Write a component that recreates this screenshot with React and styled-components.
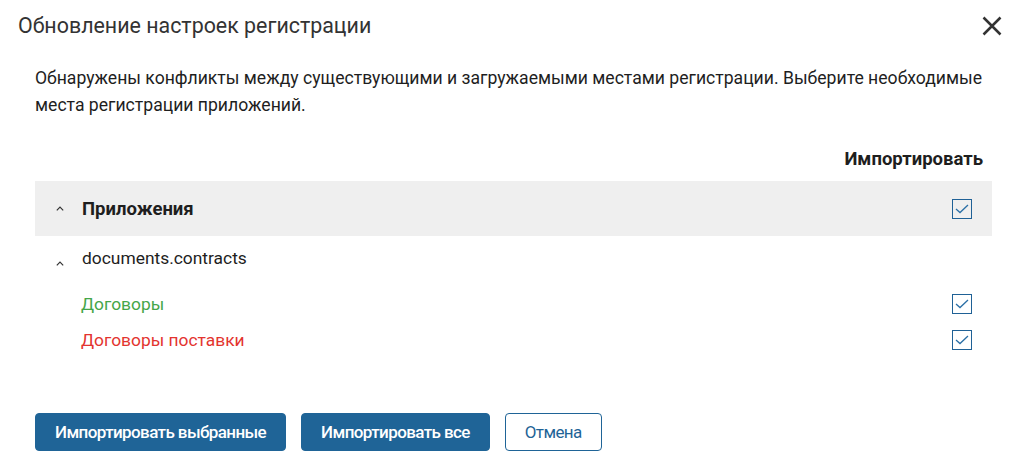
import React from "react";
import styled, { createGlobalStyle } from "styled-components";

const Global = createGlobalStyle`
  html, body { margin: 0; padding: 0; background: #fff; }
  body { font-family: Roboto, "Noto Sans", Arial, sans-serif; color: #212121; }
  * { box-sizing: border-box; }
`;

const Dialog = styled.div`
  width: 1027px;
  height: 461px;
  display: flex;
  flex-direction: column;
  background: #fff;
`;

const Header = styled.div`
  display: flex;
  align-items: center;
  justify-content: space-between;
  height: 51px;
  padding: 0 25px 0 18px;
`;

const Title = styled.h2`
  margin: 0;
  font-size: 21.4px;
  font-weight: 400;
  color: #333;
`;

const Close = styled.button`
  border: 0;
  background: none;
  padding: 0;
  width: 20px;
  height: 20px;
  display: flex;
  align-items: center;
  justify-content: center;
  cursor: pointer;
`;

const Body = styled.div`
  padding: 14px 35px 0 35px;
  display: flex;
  flex-direction: column;
`;

const Description = styled.p`
  margin: 0;
  font-size: 17.6px;
  line-height: 27px;
  color: #1e1e1e;
`;

const ColumnHead = styled.div`
  display: flex;
  justify-content: flex-end;
  align-items: center;
  height: 22px;
  margin-top: 29px;
  padding-right: 9px;
  font-size: 18.5px;
  font-weight: 700;
  color: #1e1e1e;
`;

const Row = styled.div`
  display: flex;
  align-items: center;
  height: ${(p) => p.$h}px;
  margin-top: ${(p) => p.$mt || 0}px;
  padding: 0 20px 0 ${(p) => p.$indent}px;
  background: ${(p) => (p.$shaded ? "#efefef" : "transparent")};
`;

const Chevron = styled.span`
  width: 9px;
  display: flex;
  align-items: center;
  margin-right: 17px;
  margin-top: ${(p) => p.$drop || 0}px;
`;

const Label = styled.span`
  flex: 1;
  font-size: ${(p) => (p.$bold ? 18.5 : 17.4)}px;
  font-weight: ${(p) => (p.$bold ? 700 : 400)};
  color: ${(p) => p.$color || "#1e1e1e"};
`;

const Box = styled.span`
  width: 20px;
  height: 20px;
  border: 1.5px solid #1f6196;
  display: flex;
  align-items: center;
  justify-content: center;
`;

const Footer = styled.div`
  display: flex;
  gap: 15px;
  padding: 0 35px;
  margin-top: 55px;
`;

const Button = styled.button`
  height: 38px;
  padding: 0 19px;
  border-radius: 4px;
  font-family: Roboto, Arial, sans-serif;
  font-size: 17px;
  letter-spacing: -0.6px;
  cursor: pointer;
  border: 1px solid #1f6497;
  font-weight: ${(p) => (p.$outline ? 400 : 500)};
  background: ${(p) => (p.$outline ? "#fff" : "#1f6497")};
  color: ${(p) => (p.$outline ? "#1f6497" : "#fff")};
`;

const Check = () => (
  <Box>
    <svg width="14" height="10" viewBox="0 0 14 10" fill="none">
      <path d="M1 5 L5 8.5 L13 1" stroke="#2a6fa6" strokeWidth="1.3" />
    </svg>
  </Box>
);

const Up = () => (
  <svg width="8" height="5" viewBox="0 0 8 5" fill="none">
    <path d="M0.8 4.4 L4 1.2 L7.2 4.4" stroke="#333" strokeWidth="1.2" />
  </svg>
);

export default function App() {
  return (
    <>
      <Global />
      <Dialog>
        <Header>
          <Title>Обновление настроек регистрации</Title>
          <Close aria-label="Закрыть">
            <svg width="20" height="20" viewBox="0 0 20 20">
              <path d="M1.5 1.5 L18.5 18.5 M18.5 1.5 L1.5 18.5" stroke="#333" strokeWidth="2.5" />
            </svg>
          </Close>
        </Header>
        <Body>
          <Description>
            Обнаружены конфликты между существующими и загружаемыми местами регистрации. Выберите необходимые
            места регистрации приложений.
          </Description>
          <ColumnHead>Импортировать</ColumnHead>
          <Row $shaded $h={55} $mt={11} $indent={21}>
            <Chevron><Up /></Chevron>
            <Label $bold>Приложения</Label>
            <Check />
          </Row>
          <Row $h={44} $indent={21}>
            <Chevron $drop={11}><Up /></Chevron>
            <Label>documents.contracts</Label>
          </Row>
          <Row $h={36} $mt={6} $indent={46}>
            <Label $color="#45a649">Договоры</Label>
            <Check />
          </Row>
          <Row $h={36} $indent={46}>
            <Label $color="#e3342f">Договоры поставки</Label>
            <Check />
          </Row>
        </Body>
        <Footer>
          <Button>Импортировать выбранные</Button>
          <Button>Импортировать все</Button>
          <Button $outline>Отмена</Button>
        </Footer>
      </Dialog>
    </>
  );
}
